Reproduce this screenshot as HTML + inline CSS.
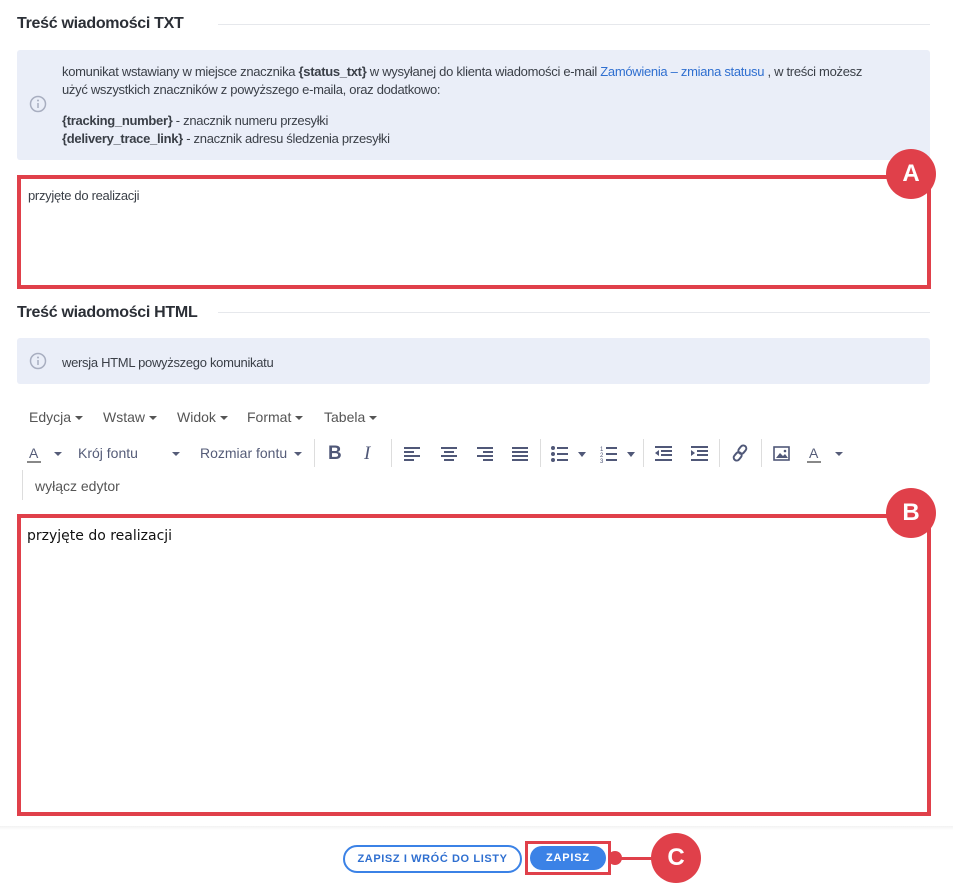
<!DOCTYPE html>
<html><head><meta charset="utf-8"><style>
*{margin:0;padding:0;box-sizing:border-box}
body{width:953px;height:886px;background:#fff;position:relative;overflow:hidden;font-family:"Liberation Sans",sans-serif;color:#333}
.a{position:absolute}
.h{font-weight:bold;font-size:16px;color:#2b2f36;letter-spacing:-0.3px}
.line{height:1px;background:#e6e8ec}
.info{background:#eaeef8;border-radius:3px}
.t{font-size:13px;color:#3a3f47;letter-spacing:-0.3px;white-space:nowrap}
.blue{color:#2f6fd0}
.red{border:4px solid #e0404a}
.badge{width:50px;height:50px;border-radius:50%;background:#e0404a;color:#fff;font-weight:bold;font-size:24px;text-align:center;line-height:50px}
.m{font-size:14px;color:#555;white-space:nowrap}
.car{display:inline-block;border-left:4px solid transparent;border-right:4px solid transparent;border-top:4px solid #555;vertical-align:middle;margin-left:4px}
.c2{position:absolute;top:452px;width:0;height:0;border-left:4px solid transparent;border-right:4px solid transparent;border-top:4px solid #555c78}
.sep{width:1px;height:28px;background:#ddd;top:439px}
svg{position:absolute}
</style></head><body>
<div class="a h" style="left:17px;top:15px">Treść wiadomości TXT</div>
<div class="a line" style="left:218px;top:24px;width:712px"></div>
<div class="a info" style="left:17px;top:50px;width:913px;height:110px"></div>
<svg style="left:29px;top:95px" width="18" height="18"><circle cx="9" cy="9" r="7.5" fill="none" stroke="#a8aec0" stroke-width="1.5"/><line x1="9" y1="8" x2="9" y2="13" stroke="#a8aec0" stroke-width="1.5"/><circle cx="9" cy="5.5" r="1" fill="#a8aec0"/></svg>
<div class="a t" style="left:62px;top:64px">komunikat wstawiany w miejsce znacznika <b>{status_txt}</b> w wysyłanej do klienta wiadomości e-mail <span class="blue">Zamówienia – zmiana statusu</span> , w treści możesz</div>
<div class="a t" style="left:62px;top:82px">użyć wszystkich znaczników z powyższego e-maila, oraz dodatkowo:</div>
<div class="a t" style="left:62px;top:113px"><b>{tracking_number}</b> - znacznik numeru przesyłki</div>
<div class="a t" style="left:62px;top:131px"><b>{delivery_trace_link}</b> - znacznik adresu śledzenia przesyłki</div>
<div class="a red" style="left:17px;top:175px;width:914px;height:114px"></div>
<div class="a t" style="left:28px;top:188px">przyjęte do realizacji</div>
<div class="a badge" style="left:886px;top:149px">A</div>

<div class="a h" style="left:17px;top:304px">Treść wiadomości HTML</div>
<div class="a line" style="left:218px;top:312px;width:712px"></div>
<div class="a info" style="left:17px;top:338px;width:913px;height:46px"></div>
<svg style="left:29px;top:352px" width="18" height="18"><circle cx="9" cy="9" r="7.5" fill="none" stroke="#a8aec0" stroke-width="1.5"/><line x1="9" y1="8" x2="9" y2="13" stroke="#a8aec0" stroke-width="1.5"/><circle cx="9" cy="5.5" r="1" fill="#a8aec0"/></svg>
<div class="a t" style="left:62px;top:355px">wersja HTML powyższego komunikatu</div>

<div class="a m" style="left:29px;top:409px">Edycja<span class="car"></span></div>
<div class="a m" style="left:103px;top:409px">Wstaw<span class="car"></span></div>
<div class="a m" style="left:177px;top:409px">Widok<span class="car"></span></div>
<div class="a m" style="left:247px;top:409px">Format<span class="car"></span></div>
<div class="a m" style="left:324px;top:409px">Tabela<span class="car"></span></div>

<div class="a m" style="left:29px;top:445px;color:#555c78;line-height:16px">A</div>
<div class="a" style="left:27px;top:461px;width:14px;height:2px;background:#888"></div>
<div class="c2" style="left:54px"></div>
<div class="a m" style="left:78px;top:445px;color:#555c78">Krój fontu</div>
<div class="c2" style="left:172px"></div>
<div class="a m" style="left:200px;top:445px;color:#555c78">Rozmiar fontu</div>
<div class="c2" style="left:294px"></div>
<div class="a sep" style="left:314px"></div>
<div class="a" style="left:328px;top:443px;font-weight:bold;font-size:19px;color:#505878">B</div>
<div class="a" style="left:364px;top:443px;font-style:italic;font-size:19px;color:#505878;font-family:'Liberation Serif',serif">I</div>
<div class="a sep" style="left:391px"></div>
<svg style="left:403px;top:446px" width="130" height="16" fill="#505878">
<rect x="1" y="1" width="16" height="2"/><rect x="1" y="5" width="10" height="2"/><rect x="1" y="9" width="16" height="2"/><rect x="1" y="13" width="10" height="2"/>
<rect x="38" y="1" width="16" height="2"/><rect x="41" y="5" width="10" height="2"/><rect x="38" y="9" width="16" height="2"/><rect x="41" y="13" width="10" height="2"/>
<rect x="74" y="1" width="16" height="2"/><rect x="80" y="5" width="10" height="2"/><rect x="74" y="9" width="16" height="2"/><rect x="80" y="13" width="10" height="2"/>
<rect x="109" y="1" width="16" height="2"/><rect x="109" y="5" width="16" height="2"/><rect x="109" y="9" width="16" height="2"/><rect x="109" y="13" width="16" height="2"/>
</svg>
<div class="a sep" style="left:540px"></div>
<svg style="left:550px;top:445px" width="90" height="18" fill="#505878">
<circle cx="3" cy="3" r="2"/><circle cx="3" cy="9" r="2"/><circle cx="3" cy="15" r="2"/><rect x="7" y="2" width="11" height="2"/><rect x="7" y="8" width="11" height="2"/><rect x="7" y="14" width="11" height="2"/>
<path d="M28 7l4 5 4-5z"/>
<text x="50" y="6" font-size="6" font-family="Liberation Sans">1</text><text x="50" y="12" font-size="6" font-family="Liberation Sans">2</text><text x="50" y="18" font-size="6" font-family="Liberation Sans">3</text>
<rect x="56" y="2" width="11" height="2"/><rect x="56" y="8" width="11" height="2"/><rect x="56" y="14" width="11" height="2"/>
<path d="M77 7l4 5 4-5z"/>
</svg>
<div class="a sep" style="left:643px"></div>
<svg style="left:655px;top:445px" width="60" height="18" fill="#505878">
<rect x="0" y="1" width="17" height="2"/><rect x="6" y="5" width="11" height="2"/><rect x="6" y="9" width="11" height="2"/><rect x="0" y="14" width="17" height="2"/><path d="M0 8l4-3v6z"/>
<rect x="36" y="1" width="17" height="2"/><rect x="42" y="5" width="11" height="2"/><rect x="42" y="9" width="11" height="2"/><rect x="36" y="14" width="17" height="2"/><path d="M40 8l-4-3v6z"/>
</svg>
<div class="a sep" style="left:719px"></div>
<svg style="left:731px;top:444px" width="18" height="18" fill="none" stroke="#505878" stroke-width="2"><rect x="8" y="1" width="6" height="9" rx="3" transform="rotate(40 11 6)"/><rect x="4" y="8" width="6" height="9" rx="3" transform="rotate(40 7 12)"/></svg>
<div class="a sep" style="left:761px"></div>
<svg style="left:773px;top:446px" width="18" height="16"><rect x="1" y="1" width="15" height="13" fill="none" stroke="#505878" stroke-width="1.6"/><path d="M3 12l4-5 3 3 2-2 3 4z" fill="#505878"/><circle cx="12" cy="5" r="1.3" fill="#505878"/></svg>
<div class="a m" style="left:809px;top:445px;color:#555c78;line-height:16px">A</div>
<div class="a" style="left:807px;top:461px;width:14px;height:2px;background:#888"></div>
<div class="c2" style="left:835px"></div>
<div class="a" style="left:22px;top:470px;width:1px;height:30px;background:#ddd"></div>
<div class="a m" style="left:35px;top:478px;color:#555">wyłącz edytor</div>

<div class="a red" style="left:17px;top:514px;width:914px;height:302px"></div>
<div class="a" style="left:27px;top:528px;font-family:'DejaVu Sans',sans-serif;font-size:14px;color:#111">przyjęte do realizacji</div>
<div class="a badge" style="left:886px;top:488px">B</div>

<div class="a" style="left:0;top:826px;width:953px;height:4px;background:linear-gradient(#f2f2f2,#fff)"></div>
<div class="a" style="left:343px;top:845px;width:179px;height:28px;border:2px solid #3b82e6;border-radius:14px;color:#2f6fd0;font-size:11px;font-weight:bold;letter-spacing:0.6px;text-align:center;line-height:24px">ZAPISZ I WRÓĆ DO LISTY</div>
<div class="a" style="left:525px;top:841px;width:86px;height:34px;border:3px solid #e0404a"></div>
<div class="a" style="left:530px;top:846px;width:76px;height:24px;background:#3b82e6;border-radius:12px;color:#fff;font-size:11px;font-weight:bold;letter-spacing:0.8px;text-align:center;line-height:24px">ZAPISZ</div>
<div class="a" style="left:608px;top:851px;width:14px;height:14px;border-radius:50%;background:#e0404a"></div>
<div class="a" style="left:615px;top:857px;width:40px;height:3px;background:#e0404a"></div>
<div class="a badge" style="left:651px;top:833px">C</div>
</body></html>
